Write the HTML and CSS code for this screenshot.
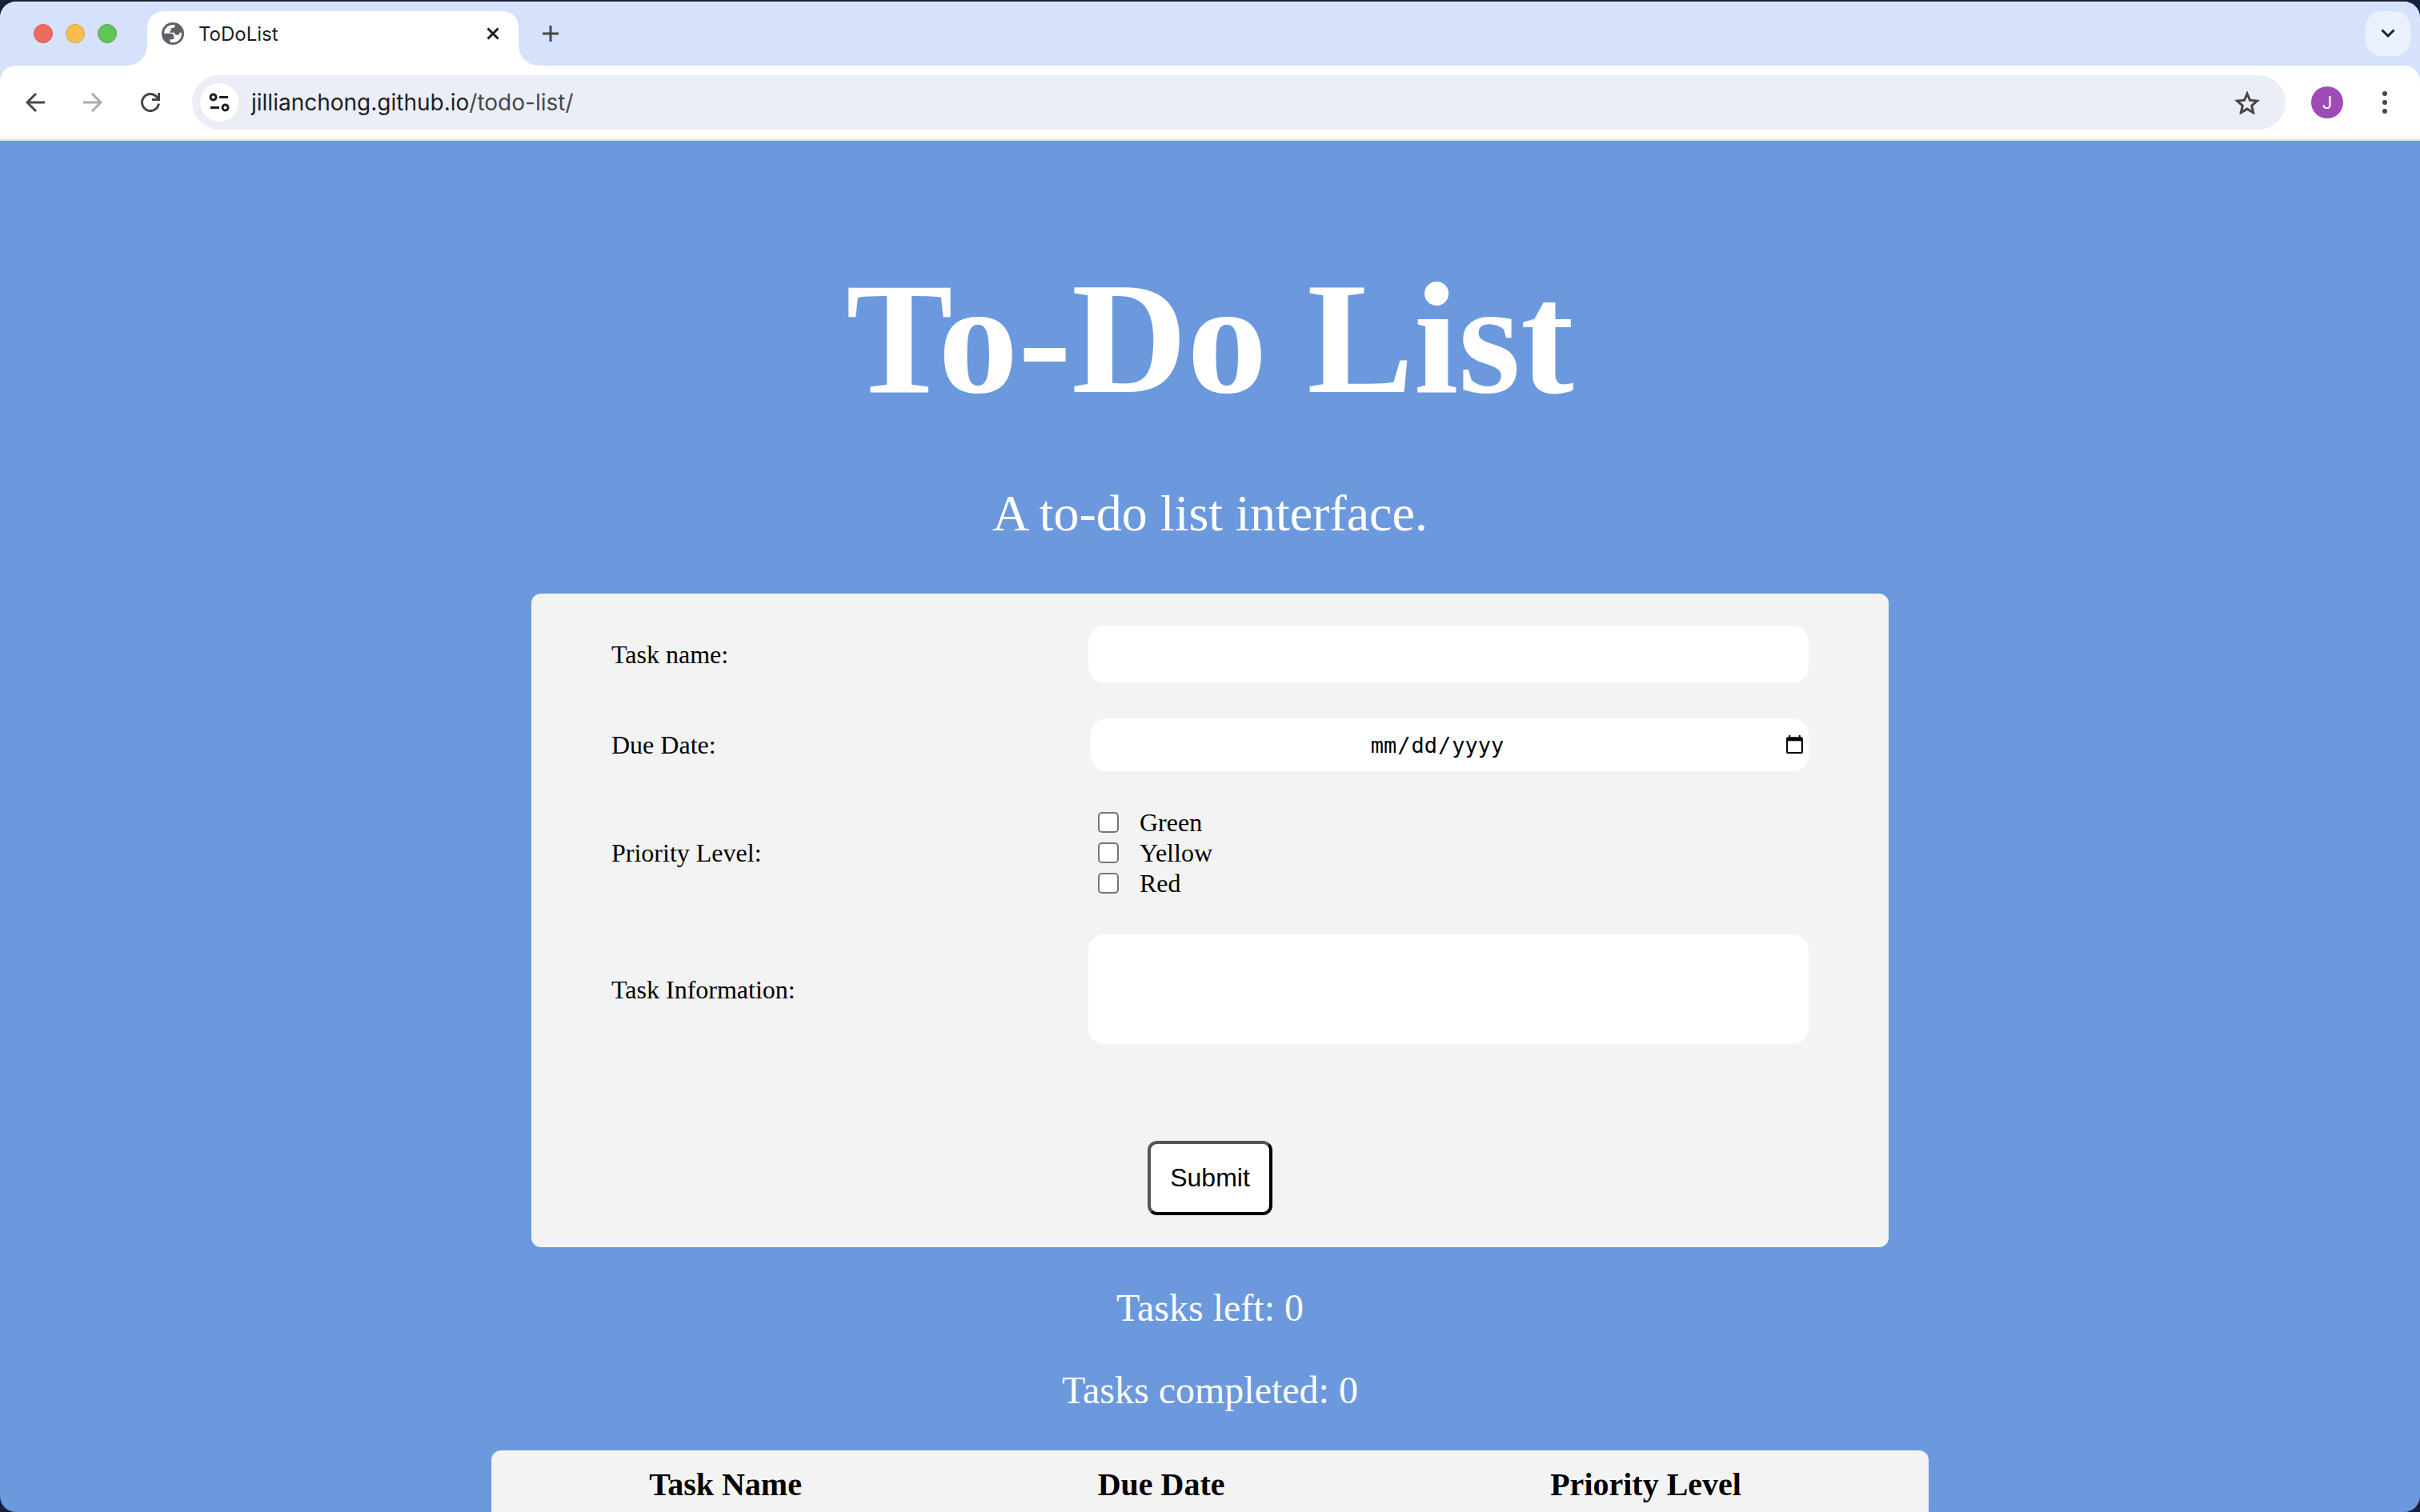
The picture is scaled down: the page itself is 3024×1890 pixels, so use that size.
FILE: index.html
```html
<!DOCTYPE html>
<html lang="en-US">
<head>
<meta charset="utf-8">
<title>ToDoList</title>
<link rel="stylesheet" href="styles.css">
</head>
<body>
<div class="window">
  <header class="chrome">
    <div class="tab-strip">
      <div class="lights">
        <span class="light light-close"></span>
        <span class="light light-minimize"></span>
        <span class="light light-zoom"></span>
      </div>
      <div class="tab">
        <svg class="favicon" viewBox="0 0 28 28" aria-hidden="true">
          <circle cx="14" cy="14" r="14" fill="#5f6368"/>
          <path d="M3 13.700A11 11 0 0 1 16.500 3.200V4.500C16.500 6 15.500 7 14 7H12.800C12 7 11.700 7.500 11.700 8.200V9.500C11.700 10.500 11.200 11 10.200 11V12.800H15C16 12.800 16.500 13.300 16.500 14.300C16.500 15.200 17 15.700 18 15.700H20.500C21.500 15.700 22 15 22 14.200C22 13.300 22.500 12.800 23.400 12.800H25A11 11 0 0 1 10.500 24.500V21.300H13.500C14.700 21.300 15.200 20.500 15.200 19.500V17.500C15.200 15 13.500 13.700 11 13.700Z" fill="#fff"/>
        </svg>
        <span class="tab-title">ToDoList</span>
        <button class="icon-button tab-close" aria-label="Close tab">
          <svg width="16" height="16" viewBox="0 0 16 16" fill="none" stroke="#1f1f1f" stroke-width="3"><path d="M1.500 1.500l13 13M14.500 1.500l-13 13"/></svg>
        </button>
      </div>
      <button class="icon-button new-tab" aria-label="New tab">
        <svg width="20" height="20" viewBox="0 0 20 20" fill="none" stroke="#474747" stroke-width="3"><path d="M10 0v20M0 10h20"/></svg>
      </button>
      <button class="icon-button tab-search" aria-label="Search tabs">
        <svg width="18" height="12" viewBox="0 0 18 12" fill="none" stroke="#1f1f1f" stroke-width="3"><path d="M1.500 1.500L9 9l7.500-7.500"/></svg>
      </button>
    </div>
    <div class="toolbar">
      <nav class="nav-buttons">
        <button class="icon-button" aria-label="Back">
          <svg width="24" height="24" viewBox="0 0 24 24" fill="none" stroke="#474747" stroke-width="3"><path d="M24 12H2M13 1L2 12l11 11"/></svg>
        </button>
        <button class="icon-button" aria-label="Forward">
          <svg width="24" height="24" viewBox="0 0 24 24" fill="none" stroke="#ababab" stroke-width="3"><path d="M0 12h22M11 1l11 11-11 11"/></svg>
        </button>
        <button class="icon-button" aria-label="Reload">
          <svg width="24" height="24" viewBox="0 0 24 24" fill="none" stroke="#474747" stroke-width="3"><path d="M22.400 13.500A10.500 10.500 0 1 1 19.500 4.700L22 7.500M22.500 0v8.500H14"/></svg>
        </button>
      </nav>
      <div class="address">
        <button class="icon-button site-info" aria-label="View site information">
          <svg width="26" height="24" viewBox="0 0 26 24" fill="none" stroke="#1f1f1f" stroke-width="3"><circle cx="5.500" cy="5.500" r="3.500"/><path d="M13 5.500h11M2 18.500h11"/><circle cx="20.500" cy="18.500" r="3.500"/></svg>
        </button>
        <a class="url" href="#">jillianchong.github.io<span class="url-path">/todo-list/</span></a>
        <button class="icon-button" aria-label="Bookmark this tab">
          <svg width="32" height="30" viewBox="0 0 32 30" fill="none" stroke="#474747" stroke-width="3"><path d="M16 4l3.500 8.300 9 .8-6.800 5.900 2 8.800-7.700-4.700-7.700 4.700 2-8.800-6.800-5.900 9-.8z"/></svg>
        </button>
      </div>
      <button class="icon-button avatar" aria-label="Profile">J</button>
      <button class="icon-button menu" aria-label="Menu">
        <svg width="6" height="28" viewBox="0 0 6 28" fill="#474747"><circle cx="3" cy="3" r="3"/><circle cx="3" cy="14" r="3"/><circle cx="3" cy="25" r="3"/></svg>
      </button>
    </div>
  </header>
  <main class="page">
    <h1 class="title">To-Do List</h1>
    <p class="subtitle">A to-do list interface.</p>
    <form class="task-form">
      <div class="fields">
        <label for="task-name">Task name:</label>
        <input class="field text-field" id="task-name" type="text">
        <label for="due-date">Due Date:</label>
        <input class="field date-field" id="due-date" type="date">
        <span id="priority-label">Priority Level:</span>
        <div class="priorities" role="group" aria-labelledby="priority-label">
          <label class="priority"><input class="tick" type="checkbox">Green</label>
          <label class="priority"><input class="tick" type="checkbox">Yellow</label>
          <label class="priority"><input class="tick" type="checkbox">Red</label>
        </div>
        <label for="task-info">Task Information:</label>
        <textarea class="field info-field" id="task-info"></textarea>
      </div>
      <button class="submit" type="submit">Submit</button>
    </form>
    <p class="count">Tasks left: 0</p>
    <p class="count">Tasks completed: 0</p>
    <table class="tasks">
      <thead>
        <tr><th scope="col">Task Name</th><th scope="col">Due Date</th><th scope="col">Priority Level</th></tr>
      </thead>
    </table>
  </main>
</div>
</body>
</html>
```
FILE: styles.css
```css
* {
  box-sizing: border-box;
}

body {
  margin: 0;
  height: 100vh;
  padding-top: 2px;
  overflow: hidden;
  background: #16213d;
}

.window {
  display: flex;
  flex-direction: column;
  height: 100%;
  overflow: hidden;
  border-radius: 20px;
  background: #6c99dd;
}

/* Browser frame */

.chrome {
  flex: none;
  background: #d6e1fb;
  box-shadow: inset 0 1px #f0f4fe;
  font-family: Inter, "Liberation Sans", sans-serif;
  color: #1f1f1f;
}

.icon-button {
  display: flex;
  align-items: center;
  justify-content: center;
  padding: 0;
  border: 0;
  background: none;
}

.tab-strip {
  display: flex;
  align-items: center;
  height: 80px;
  padding: 0 12px 0 42px;
}

.lights {
  display: flex;
  gap: 16px;
  margin-right: 38px;
}

.light {
  width: 24px;
  height: 24px;
  border: 1px solid;
  border-radius: 50%;
}

.light-close {
  background: #ed6a5e;
  border-color: #d35f54;
}

.light-minimize {
  background: #f5bf4f;
  border-color: #d8a441;
}

.light-zoom {
  background: #61c554;
  border-color: #50a944;
}

.tab {
  position: relative;
  display: flex;
  align-items: center;
  align-self: flex-end;
  width: 464px;
  height: 68px;
  padding: 0 24px 12px 18px;
  border-radius: 20px 20px 0 0;
  background: #fff;
}

.tab::before,
.tab::after {
  content: "";
  position: absolute;
  bottom: 0;
  width: 24px;
  height: 24px;
}

.tab::before {
  right: 100%;
  background: radial-gradient(circle at 0 0, transparent 23px, #fff 24px);
}

.tab::after {
  left: 100%;
  background: radial-gradient(circle at 100% 0, transparent 23px, #fff 24px);
}

.favicon {
  width: 28px;
  height: 28px;
}

.tab-title {
  flex: 1;
  padding-left: 18px;
  font-size: 24px;
}

.new-tab {
  margin-left: 30px;
}

.tab-search {
  width: 56px;
  height: 56px;
  margin-left: auto;
  border-radius: 20px;
  background: #eaf1fc;
}

.toolbar {
  display: flex;
  align-items: center;
  height: 94px;
  padding: 0 41px 0 32px;
  border-bottom: 2px solid #dfe1e3;
  border-radius: 20px 20px 0 0;
  background: #fff;
}

.nav-buttons {
  display: flex;
  gap: 48px;
  margin-right: 40px;
}

.address {
  display: flex;
  flex: 1;
  align-items: center;
  height: 68px;
  padding: 0 32px 0 10px;
  border-radius: 34px;
  background: #ebeef6;
}

.site-info {
  width: 48px;
  height: 48px;
  border-radius: 50%;
  background: #fff;
}

.url {
  flex: 1;
  padding-left: 16px;
  font-size: 28px;
  color: #1f1f1f;
  text-decoration: none;
}

.url-path {
  color: #474747;
}

.avatar {
  width: 40px;
  height: 40px;
  margin: 0 49px 0 32px;
  border-radius: 50%;
  background: #9d4bb5;
  color: #fff;
  font-family: Roboto, sans-serif;
  font-size: 22px;
}

/* To-do page */

.page {
  flex: 1;
  min-height: 0;
  overflow: hidden;
  padding: 132px 16px 0;
  font-family: "Liberation Serif", serif;
  font-size: 32px;
}

.title {
  margin: 0 0 67px;
  font-size: 200px;
  line-height: 230px;
  text-align: center;
  color: #fff;
}

.subtitle {
  margin: 0 0 63px;
  font-size: 64px;
  line-height: 74px;
  text-align: center;
  color: #fff;
}

.task-form {
  max-width: 1696px;
  margin: 0 auto 48px;
  padding: 40px 100px;
  border-radius: 12px;
  background: #f3f3f3;
}

.fields {
  display: grid;
  grid-template-columns: 149fr 225fr;
  row-gap: 45px;
  align-items: center;
  line-height: 38px;
}

.field {
  width: 100%;
  padding: 0 12px;
  border: 0;
  border-radius: 20px;
  background: #fff;
  font-size: 28px;
}

.text-field {
  height: 71px;
}

.date-field {
  justify-self: end;
  width: calc(100% - 3px);
  height: 66px;
  padding: 0 2px;
  font-family: "DejaVu Sans Mono", monospace;
  font-size: 27px;
  text-align: center;
}

.date-field::-webkit-datetime-edit {
  text-align: center;
}

.info-field {
  height: 137px;
  resize: none;
}

.priorities {
  padding-left: 12px;
}

.priority {
  display: flex;
  align-items: center;
  gap: 26px;
}

.tick {
  appearance: none;
  width: 26px;
  height: 26px;
  margin: 0;
  border: 2px solid #767676;
  border-radius: 5px;
  background: #fff;
}

.submit {
  display: block;
  width: 156px;
  height: 93px;
  margin: 121px auto 0;
  padding: 0;
  border: 4px outset #000;
  border-radius: 12px;
  background: #fff;
  color: #000;
  font-family: "Liberation Sans", sans-serif;
  font-size: 32px;
}

.count {
  margin: 0 0 48px;
  font-size: 48px;
  line-height: 55px;
  text-align: center;
  color: #fff;
}

.tasks {
  width: 100%;
  max-width: 1796px;
  margin: 0 auto;
  border-spacing: 0;
  border-radius: 12px;
  background: #f3f3f3;
  font-size: 40px;
  line-height: 46px;
}

.tasks th {
  padding: 20px;
}
```
